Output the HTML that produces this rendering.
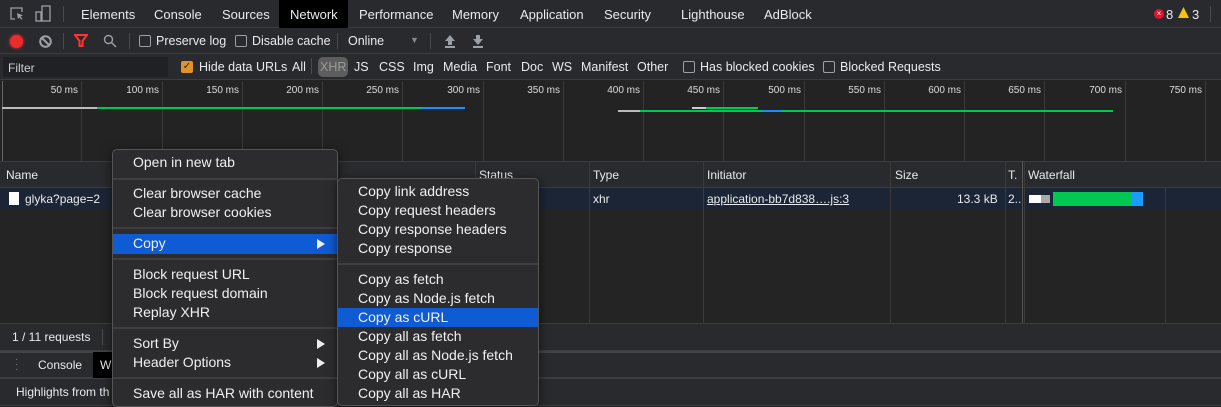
<!DOCTYPE html>
<html><head><meta charset="utf-8"><style>
*{box-sizing:border-box;margin:0;padding:0}
body{width:1221px;height:406px;overflow:hidden;background:#242424;font-family:"Liberation Sans",sans-serif;font-size:12px;color:#e8eaed;position:relative}
.a{position:absolute;white-space:nowrap}
.bar{position:absolute;left:0;width:1221px;background:#292a2d;border-bottom:1px solid #3d3d3f}
.vl{position:absolute;width:1px;background:#3a3a3a}
.cb{display:inline-block;width:12px;height:12px;border:1px solid #9aa0a6;border-radius:2px;vertical-align:-2px;margin-right:5px}
.menu{position:absolute;background:#2c2c2f;border:1px solid #555;border-radius:5px;box-shadow:0 3px 10px rgba(0,0,0,.6);font-size:14px;color:#f0f0f0}
.mi{position:absolute;left:0;right:0;height:19px;line-height:19px;padding-left:20px}
.hl{background:#0f5bd3}
.sep{position:absolute;left:0;right:0;height:2px;background:#3f3f42}
.arr{position:absolute;right:12px;top:5px;width:0;height:0;border-left:8px solid #eee;border-top:5px solid transparent;border-bottom:5px solid transparent}
</style></head><body>
<div class="bar" style="top:0;height:28px"></div>
<svg class="a" style="left:9px;top:6px" width="16" height="16" viewBox="0 0 16 16" fill="none" stroke="#9aa0a6" stroke-width="1.3"><path d="M6 13H2V2h11v4"/><path d="M8 7l6 2.5-2.5 1 2 2.5-1 .8-2-2.5-1.5 2z" fill="#9aa0a6" stroke="none"/></svg>
<svg class="a" style="left:35px;top:5px" width="16" height="18" viewBox="0 0 16 18" fill="none" stroke="#9aa0a6" stroke-width="1.3"><rect x="7" y="1" width="8" height="15"/><rect x="1" y="7" width="5" height="9"/></svg>
<div class="vl" style="left:63px;top:6px;height:16px;background:#4a4a4a"></div>
<div class="a" style="left:279px;top:0;width:69px;height:28px;background:#000"></div>
<div class="a" style="top:7px;left:81px;font-size:13px">Elements</div>
<div class="a" style="top:7px;left:154px;font-size:13px">Console</div>
<div class="a" style="top:7px;left:222px;font-size:13px">Sources</div>
<div class="a" style="top:7px;left:290px;font-size:13px">Network</div>
<div class="a" style="top:7px;left:359px;font-size:13px">Performance</div>
<div class="a" style="top:7px;left:452px;font-size:13px">Memory</div>
<div class="a" style="top:7px;left:520px;font-size:13px">Application</div>
<div class="a" style="top:7px;left:604px;font-size:13px">Security</div>
<div class="a" style="top:7px;left:681px;font-size:13px">Lighthouse</div>
<div class="a" style="top:7px;left:764px;font-size:13px">AdBlock</div>
<div class="a" style="left:1154px;top:9px;width:10px;height:10px;border-radius:50%;background:#e8112d;color:#fff;font-size:8px;line-height:10px;text-align:center">×</div>
<div class="a" style="top:7px;left:1166px;font-size:13px">8</div>
<svg class="a" style="left:1178px;top:7px" width="11" height="11"><path d="M5.5 0L11 11H0z" fill="#f4c20d"/></svg>
<div class="a" style="top:7px;left:1192px;font-size:13px">3</div>
<div class="vl" style="left:1210px;top:6px;height:16px;background:#4a4a4a"></div>
<div class="bar" style="top:28px;height:26px"></div>
<div class="a" style="left:10px;top:35px;width:13px;height:13px;border-radius:50%;background:#ee2a2a;box-shadow:0 0 3px #f33"></div>
<svg class="a" style="left:39px;top:35px" width="13" height="13" fill="none" stroke="#9aa0a6" stroke-width="2"><circle cx="6.5" cy="6.5" r="5.3"/><path d="M3 3l7 7"/></svg>
<div class="vl" style="left:63px;top:33px;height:16px;background:#4a4a4a"></div>
<svg class="a" style="left:74px;top:34px" width="14" height="14"><path d="M1 1h12L8.5 7v5h-3V7z" fill="none" stroke="#f33" stroke-width="2"/></svg>
<svg class="a" style="left:103px;top:34px" width="14" height="14" fill="none" stroke="#9aa0a6" stroke-width="1.4"><circle cx="5.5" cy="5.5" r="4"/><path d="M8.5 8.5l4.5 4.5"/></svg>
<div class="vl" style="left:129px;top:33px;height:16px;background:#4a4a4a"></div>
<div class="a" style="left:139px;top:34px;font-size:12.5px"><span class="cb"></span>Preserve log</div>
<div class="a" style="left:235px;top:34px;font-size:12.5px"><span class="cb"></span>Disable cache</div>
<div class="vl" style="left:337px;top:33px;height:16px;background:#4a4a4a"></div>
<div class="a" style="left:348px;top:34px;font-size:12.5px">Online</div>
<div class="a" style="left:410px;top:35px;color:#888;font-size:9px">▼</div>
<div class="vl" style="left:430px;top:33px;height:16px;background:#4a4a4a"></div>
<svg class="a" style="left:444px;top:34px" width="12" height="14" fill="#9aa0a6"><path d="M6 1L1 7h3v4h4V7h3z"/><rect x="1" y="12" width="10" height="2"/></svg>
<svg class="a" style="left:472px;top:34px" width="12" height="14" fill="#9aa0a6"><path d="M6 11L1 5h3V1h4v4h3z"/><rect x="1" y="12" width="10" height="2"/></svg>
<div class="bar" style="top:54px;height:26px"></div>
<div class="a" style="left:3px;top:57px;width:165px;height:20px;background:#202124"></div>
<div class="a" style="left:8px;top:61px;color:#cfcfcf">Filter</div>
<div class="a" style="left:181px;top:61px;width:12px;height:12px;border-radius:2px;background:#e0922b;color:#222;font-size:10px;line-height:12px;text-align:center">✓</div>
<div class="a" style="left:199px;top:60px;font-size:12.5px">Hide data URLs</div>
<div class="a" style="left:292px;top:60px;font-size:12.5px">All</div>
<div class="vl" style="left:311px;top:58px;height:16px;background:#4a4a4a"></div>
<div class="a" style="left:318px;top:57px;width:30px;height:20px;border-radius:5px;background:#5d5d5d"></div>
<div class="a" style="left:320px;top:60px;font-size:12.5px;color:#9a9a9a">XHR</div>
<div class="a" style="left:354px;top:60px;font-size:12.5px">JS</div>
<div class="a" style="left:379px;top:60px;font-size:12.5px">CSS</div>
<div class="a" style="left:413px;top:60px;font-size:12.5px">Img</div>
<div class="a" style="left:443px;top:60px;font-size:12.5px">Media</div>
<div class="a" style="left:486px;top:60px;font-size:12.5px">Font</div>
<div class="a" style="left:521px;top:60px;font-size:12.5px">Doc</div>
<div class="a" style="left:552px;top:60px;font-size:12.5px">WS</div>
<div class="a" style="left:581px;top:60px;font-size:12.5px">Manifest</div>
<div class="a" style="left:637px;top:60px;font-size:12.5px">Other</div>
<div class="a" style="left:683px;top:60px;font-size:12.5px"><span class="cb"></span>Has blocked cookies</div>
<div class="a" style="left:823px;top:60px;font-size:12.5px"><span class="cb"></span>Blocked Requests</div>
<div class="a" style="left:0;top:81px;width:1221px;height:80px;background:#232323"></div>
<div class="vl" style="left:2px;top:81px;height:80px;background:#666"></div>
<div id="grid"></div>
<div class="a" style="left:2px;top:107px;width:95px;height:2px;background:#bbb"></div>
<div class="a" style="left:97px;top:107px;width:325px;height:2px;background:#00c853"></div>
<div class="a" style="left:422px;top:107px;width:43px;height:2px;background:#1a8cff"></div>
<div class="a" style="left:618px;top:110px;width:22px;height:2px;background:#bbb"></div>
<div class="a" style="left:640px;top:110px;width:473px;height:2px;background:#00c853"></div>
<div class="a" style="left:762px;top:110px;width:20px;height:2px;background:#1a8cff"></div>
<div class="a" style="left:692px;top:107px;width:14px;height:2px;background:#ccc"></div>
<div class="a" style="left:706px;top:107px;width:52px;height:2px;background:#00c853"></div>
<div class="a" style="left:0;top:161px;width:1221px;height:27px;background:#292a2d;border-top:1px solid #3d3d3f;border-bottom:1px solid #3d3d3f"></div>
<div class="a" style="left:6px;top:168px">Name</div>
<div class="a" style="left:479px;top:168px">Status</div>
<div class="a" style="left:593px;top:168px">Type</div>
<div class="a" style="left:707px;top:168px">Initiator</div>
<div class="a" style="left:895px;top:168px">Size</div>
<div class="a" style="left:1008px;top:168px">T.</div>
<div class="a" style="left:1028px;top:168px">Waterfall</div>
<div class="a" style="left:0;top:188px;width:1221px;height:21px;background:#1c2536"></div>
<div class="a" style="left:9px;top:192px;width:10px;height:13px;background:#fff"></div>
<div class="a" style="left:25px;top:192px">glyka?page=2</div>
<div class="a" style="left:593px;top:192px">xhr</div>
<div class="a" style="left:707px;top:192px;text-decoration:underline">application-bb7d838….js:3</div>
<div class="a" style="left:957px;top:192px">13.3 kB</div>
<div class="a" style="left:1008px;top:192px">2..</div>
<div class="a" style="left:1029px;top:195px;width:12px;height:8px;background:#fff"></div>
<div class="a" style="left:1041px;top:195px;width:9px;height:8px;background:#aaa"></div>
<div class="a" style="left:1053px;top:192px;width:79px;height:14px;background:#00c853"></div>
<div class="a" style="left:1132px;top:192px;width:11px;height:14px;background:#1a9cff"></div>
<div class="vl" style="left:589px;top:161px;height:162px"></div>
<div class="vl" style="left:703px;top:161px;height:162px"></div>
<div class="vl" style="left:890px;top:161px;height:162px"></div>
<div class="vl" style="left:1005px;top:161px;height:162px"></div>
<div class="vl" style="left:1022px;top:161px;height:162px;background:#555"></div>
<div class="vl" style="left:1024px;top:161px;height:162px"></div>
<div class="vl" style="left:1165px;top:188px;height:135px"></div>
<div class="vl" style="left:475px;top:161px;height:162px"></div>
<div class="bar" style="top:323px;height:28px;border-top:1px solid #3d3d3f"></div>
<div class="a" style="left:12px;top:330px">1 / 11 requests</div>
<div class="vl" style="left:102px;top:329px;height:16px;background:#4a4a4a"></div>
<div class="bar" style="top:351px;height:27px;border-top:2px solid #444"></div>
<div class="a" style="left:15px;top:357px;color:#888;font-size:10px;line-height:5px">·<br>·<br>·</div>
<div class="a" style="left:38px;top:358px">Console</div>
<div class="a" style="left:93px;top:352px;width:20px;height:26px;background:#000"></div>
<div class="a" style="left:100px;top:358px">W</div>
<div class="bar" style="top:378px;height:28px;border-top:1px solid #3d3d3f"></div>
<div class="a" style="left:16px;top:385px">Highlights from th</div>
<div class="menu" style="left:112px;top:149px;width:226px;height:258px">
<div class="mi" style="top:3px">Open in new tab</div>
<div class="sep" style="top:28px"></div>
<div class="mi" style="top:34px">Clear browser cache</div>
<div class="mi" style="top:53px">Clear browser cookies</div>
<div class="sep" style="top:77px"></div>
<div class="mi hl" style="top:84px;height:20px">Copy<span class="arr"></span></div>
<div class="sep" style="top:108px"></div>
<div class="mi" style="top:115px">Block request URL</div>
<div class="mi" style="top:134px">Block request domain</div>
<div class="mi" style="top:153px">Replay XHR</div>
<div class="sep" style="top:177px"></div>
<div class="mi" style="top:184px">Sort By<span class="arr"></span></div>
<div class="mi" style="top:203px">Header Options<span class="arr"></span></div>
<div class="sep" style="top:227px"></div>
<div class="mi" style="top:234px">Save all as HAR with content</div>
</div>
<div class="menu" style="left:337px;top:178px;width:202px;height:228px">
<div class="mi" style="top:3px">Copy link address</div>
<div class="mi" style="top:22px">Copy request headers</div>
<div class="mi" style="top:41px">Copy response headers</div>
<div class="mi" style="top:60px">Copy response</div>
<div class="sep" style="top:84px"></div>
<div class="mi" style="top:91px">Copy as fetch</div>
<div class="mi" style="top:110px">Copy as Node.js fetch</div>
<div class="mi hl" style="top:129px">Copy as cURL</div>
<div class="mi" style="top:148px">Copy all as fetch</div>
<div class="mi" style="top:167px">Copy all as Node.js fetch</div>
<div class="mi" style="top:186px">Copy all as cURL</div>
<div class="mi" style="top:205px">Copy all as HAR</div>
</div>
<script>
var g=document.getElementById('grid'),h='';
for(var k=1;k<=15;k++){var x=Math.round(2+80.25*k);
h+='<div class="vl" style="left:'+(x-1)+'px;top:81px;height:80px"></div>';
h+='<div class="a" style="left:'+(x-60)+'px;width:56px;text-align:right;top:85px;font-size:10px;color:#ddd">'+(k*50)+' ms</div>';}
g.innerHTML=h;
</script>
</body></html>
